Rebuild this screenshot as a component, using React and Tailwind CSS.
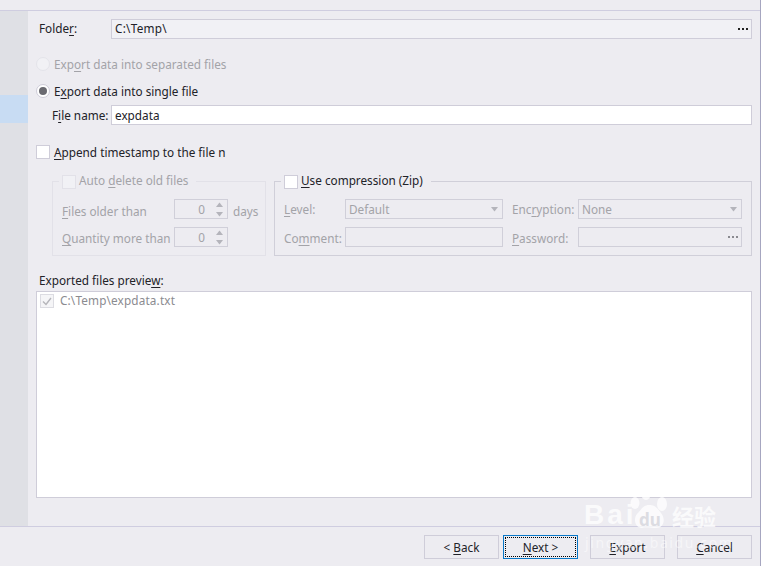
const U = ({ children }) => <span className="underline underline-offset-2 decoration-1">{children}</span>;

const Caret = () => (
  <svg width="9" height="5" viewBox="0 0 9 5" className="shrink-0"><path d="M1 0h7L4.5 4.5z" fill="#b4b4bb" /></svg>
);

const Dots = ({ color }) => (
  <span className="flex gap-[2px]">
    <span className={`w-[2px] h-[2px] ${color}`} />
    <span className={`w-[2px] h-[2px] ${color}`} />
    <span className={`w-[2px] h-[2px] ${color}`} />
  </span>
);

const Spin = () => (
  <div className="w-[54px] h-[20px] border border-[#d0cfd9] flex items-center justify-end text-[#a3a3a8]">
    <span className="mr-[10px]">0</span>
    <div className="flex flex-col gap-[5px] mr-[3px]">
      <svg width="9" height="5" viewBox="0 0 9 5"><path d="M1 5h7L4.5 0.5z" fill="#b4b4bb" /></svg>
      <svg width="9" height="5" viewBox="0 0 9 5"><path d="M1 0h7L4.5 4.5z" fill="#b4b4bb" /></svg>
    </div>
  </div>
);

const Box = ({ className = "", children }) => (
  <span className={`w-[14px] h-[14px] border flex items-center justify-center shrink-0 ${className}`}>{children}</span>
);

const Btn = ({ children, className = "", focus }) => (
  <div className={`w-[75px] h-[24px] border flex items-center justify-center ${focus ? "border-[#0a78c8] p-[1px]" : "border-[#cfcdd9]"} ${className}`}>
    {focus ? (
      <div className="w-full h-full border border-dotted border-black flex items-center justify-center">{children}</div>
    ) : children}
  </div>
);

export default function App() {
  return (
    <div className="w-[761px] h-[566px] overflow-hidden relative flex flex-col bg-[#edecf1] border-r border-[#a6a6c0] text-[11.75px] leading-[16px] text-[#222228] font-['Noto_Sans','Open_Sans',sans-serif]">
      <div className="h-[11px] shrink-0 border-b border-[#cfcde0]" />
      <div className="flex h-[515px] shrink-0">
        <div className="w-[28px] shrink-0 bg-[#dfe0e5] pt-[84px]">
          <div className="h-[28px] bg-[#c8dcf3]" />
        </div>
        <div className="flex-1 pl-[8px] pr-[8px] flex flex-col">
          <div className="flex items-center h-[20px] mt-[8px]">
            <span className="w-[75px] pl-[3px] pb-[2px]">Folde<U>r</U>:</span>
            <div className="flex-1 h-[20px] bg-[#f1f1f5] border border-[#cfcdd9] pl-[3px] pr-[3px] flex items-center justify-between">
              <span className="tracking-[0.25px] pb-[2px]">C:\Temp\</span>
              <Dots color="bg-[#222]" />
            </div>
          </div>

          <div className="flex items-center h-[16px] mt-[17px] text-[#a3a3a8]">
            <span className="w-[14px] h-[14px] rounded-full bg-[#f1f1f5] border border-[#e4e4ea] shrink-0" />
            <span className="ml-[4px]">Exp<U>o</U>rt data into separated files</span>
          </div>

          <div className="flex items-center h-[16px] mt-[11px]">
            <span className="w-[14px] h-[14px] rounded-full bg-white border border-[#cfcdd9] shrink-0 flex items-center justify-center">
              <span className="w-[8px] h-[8px] rounded-full bg-[#6a6a70]" />
            </span>
            <span className="ml-[4px]">E<U>x</U>port data into single file</span>
          </div>

          <div className="flex items-center h-[20px] mt-[6px]">
            <span className="w-[75px] pl-[16px]">F<U>i</U>le name:</span>
            <div className="flex-1 h-[20px] bg-white border border-[#cfcdd9] pl-[3px] flex items-center">expdata</div>
          </div>

          <div className="flex items-center h-[16px] mt-[19px]">
            <Box className="bg-white border-[#cfcdd9]" />
            <span className="ml-[4px]"><U>A</U>ppend timestamp to the file n</span>
          </div>

          <div className="flex mt-[21px] ml-[16px] gap-[8px]">
            <div className="relative w-[214px] h-[75px] border border-[#e2e1e8] text-[#a3a3a8] pt-[17px] pl-[9px]">
              <div className="absolute left-[6px] top-[-8px] h-[16px] px-[3px] bg-[#edecf1] flex items-center">
                <Box className="border-[#e2e1e8] bg-[#f1f1f5]" />
                <span className="ml-[3px] pr-[5px] pb-[4px]">Auto <U>d</U>elete old files</span>
              </div>
              <div className="flex items-center h-[20px]">
                <span className="w-[112px] pt-[4px]"><U>F</U>iles older than</span>
                <Spin />
                <span className="ml-[5px] pt-[4px]">days</span>
              </div>
              <div className="flex items-center h-[20px] mt-[8px]">
                <span className="w-[112px] pt-[2px]"><U>Q</U>uantity more than</span>
                <Spin />
              </div>
            </div>

            <div className="relative flex-1 h-[75px] border border-[#d0cfd9] text-[#a3a3a8] pt-[17px] pl-[9px]">
              <div className="absolute left-[6px] top-[-8px] h-[16px] px-[3px] bg-[#edecf1] flex items-center text-[#222228]">
                <Box className="bg-white border-[#cfcdd9]" />
                <span className="ml-[3px] pr-[5px] pb-[4px]"><U>U</U>se compression (Zip)</span>
              </div>
              <div className="flex items-center h-[20px]">
                <span className="w-[61px]"><U>L</U>evel:</span>
                <div className="w-[158px] h-[20px] border border-[#d0cfd9] pl-[3px] pr-[3px] flex items-center justify-between"><span>Default</span><Caret /></div>
                <span className="w-[66px] ml-[9px]">Enc<U>r</U>yption:</span>
                <div className="w-[164px] h-[20px] border border-[#d0cfd9] pl-[3px] pr-[3px] flex items-center justify-between"><span>None</span><Caret /></div>
              </div>
              <div className="flex items-center h-[20px] mt-[8px]">
                <span className="w-[61px] pt-[2px]">Co<U>m</U>ment:</span>
                <div className="w-[158px] h-[20px] border border-[#d0cfd9]" />
                <span className="w-[66px] ml-[9px] pt-[2px]"><U>P</U>assword:</span>
                <div className="w-[164px] h-[20px] border border-[#d0cfd9] pr-[3px] flex items-center justify-end"><Dots color="bg-[#8a8a90]" /></div>
              </div>
            </div>
          </div>

          <div className="h-[16px] mt-[16px] pl-[3px]">Exported files previe<U>w</U>:</div>
          <div className="h-[207px] mt-[3px] bg-white border border-[#cfcdd9] text-[#8b8b90] flex flex-col">
            <div className="flex items-center h-[16px] pl-[3px] mt-[1px]">
              <Box className="border-[#dcdce2] bg-[#f5f5f7]">
                <svg width="10" height="9" viewBox="0 0 10 9"><path d="M1 4.5l3 3L9 1" fill="none" stroke="#b5b5ba" strokeWidth="1.4" /></svg>
              </Box>
              <span className="ml-[6px] tracking-[0.15px] pb-[2px]">C:\Temp\expdata.txt</span>
            </div>
          </div>
        </div>
      </div>

      <div className="flex-1 border-t border-[#cfcde0] pt-[8px] pr-[8px] flex justify-end">
        <Btn><span>&lt; <U>B</U>ack</span></Btn>
        <Btn focus className="ml-[4px]"><span><U>N</U>ext &gt;</span></Btn>
        <Btn className="ml-[12px]"><span><U>E</U>xport</span></Btn>
        <Btn className="ml-[12px]"><span><U>C</U>ancel</span></Btn>
      </div>

      <div className="absolute left-[584px] top-[484px] w-[170px] h-[76px] pointer-events-none">
        <svg width="44" height="46" viewBox="0 0 44 46" className="absolute left-[44px] top-[0px]" fill="#ffffff" fillOpacity="0.75">
          <ellipse cx="7" cy="19" rx="4.5" ry="6" />
          <ellipse cx="18" cy="9" rx="5" ry="7" />
          <ellipse cx="34" cy="20" rx="5" ry="7" />
          <path d="M21 21c5 0 8 2 12 8 5 6 3 15-5 15-4 0-10-1-14 0-7 0-9-9-5-14 4-4 6-9 12-9z" />
        </svg>
        <span className="absolute left-[0px] top-[16px] text-[28px] leading-[30px] tracking-[3px] font-bold text-white/75 font-['Liberation_Sans',sans-serif]">Bai</span>
        <span className="absolute left-[55px] top-[26px] text-[17px] leading-[20px] font-bold text-[#dcdce2]">du</span>
        <span className="absolute left-[88px] top-[18px] text-[22px] leading-[26px] font-bold text-white/75 font-['Noto_Sans_CJK_SC',sans-serif]">经验</span>
        <span className="absolute left-[1px] top-[50px] text-[14px] leading-[18px] tracking-[1.6px] text-white/50">jingyan.baidu.com</span>
      </div>
    </div>
  );
}
